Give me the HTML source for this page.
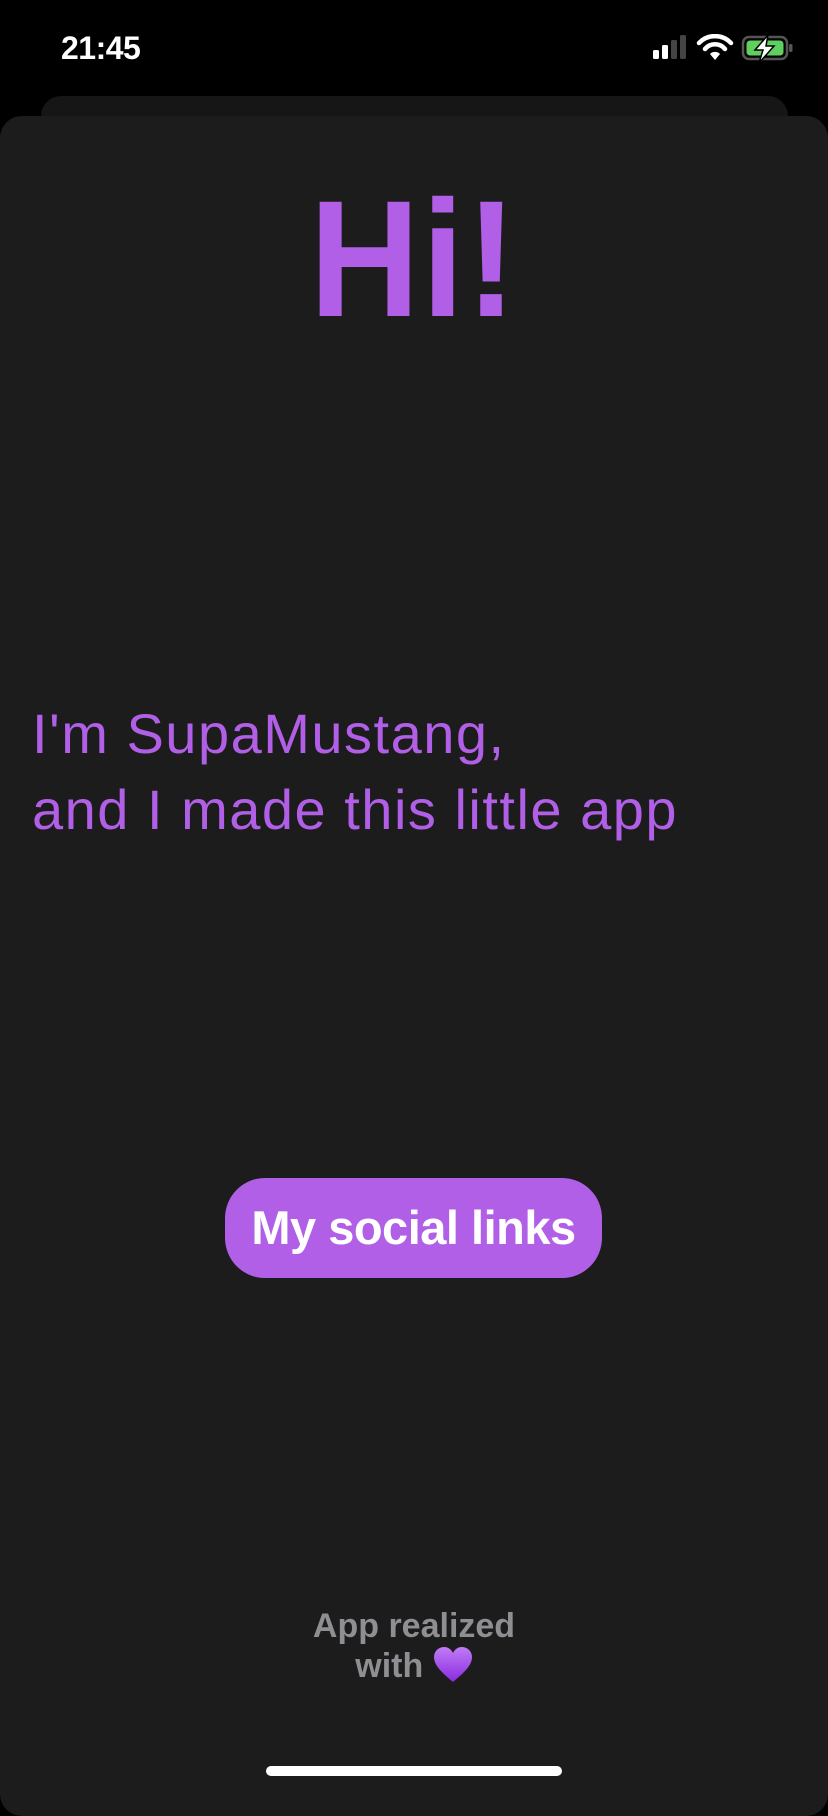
<!DOCTYPE html>
<html><head><meta charset="utf-8"><style>
body{margin:0;width:828px;height:1792px;background:#000;position:relative;overflow:hidden;font-family:"Liberation Sans",sans-serif}
.abs{position:absolute}
</style></head><body>
<div class="abs" style="left:61px;top:30px;color:#fff;font-size:32px;font-weight:bold;letter-spacing:-0.5px">21:45</div>
<svg class="abs" style="left:650px;top:34px" width="150" height="32" viewBox="0 0 150 32">
<rect x="3" y="16" width="6" height="9" rx="1.5" fill="#fff"/>
<rect x="12" y="11" width="6" height="14" rx="1.5" fill="#fff"/>
<rect x="21" y="6" width="6" height="19" rx="1.5" fill="#444"/>
<rect x="30" y="1" width="6" height="24" rx="1.5" fill="#444"/>
<path d="M49 9 A22 22 0 0 1 81 9" stroke="#fff" stroke-width="4.5" fill="none" stroke-linecap="round"/>
<path d="M55 15 A13 13 0 0 1 75 15" stroke="#fff" stroke-width="4.5" fill="none" stroke-linecap="round"/>
<path d="M65 26 L60 20 A7 7 0 0 1 70 20 Z" fill="#fff"/>
<rect x="93" y="3" width="44" height="22" rx="6" fill="none" stroke="#555" stroke-width="2.5"/>
<rect x="96.5" y="6.5" width="37" height="15" rx="3.5" fill="#5fcf5f"/>
<rect x="139" y="10" width="3.5" height="8" rx="1.5" fill="#555"/>
<path d="M118 1 L105 16 L113 16 L109 29 L124 12 L116 12 Z" fill="#fff" stroke="#000" stroke-width="1.5"/>
</svg>
<div class="abs" style="left:41px;top:96px;width:747px;height:60px;background:#161616;border-radius:20px"></div>
<div class="abs" style="left:0;top:116px;width:828px;height:1700px;background:#1c1c1c;border-radius:22px"></div>
<div class="abs" style="left:214px;top:160px;width:400px;text-align:center;color:#b05fe6;font-size:166px;font-weight:bold;line-height:200px;transform:scaleX(0.92);letter-spacing:2px">Hi!</div>
<div class="abs" style="left:32px;top:696px;color:#b05fe6;font-size:56px;line-height:76px;white-space:nowrap;letter-spacing:1.5px">I'm SupaMustang,<br>and I made this little app</div>
<div class="abs" style="left:225px;top:1178px;width:377px;height:100px;background:#b05fe6;border-radius:40px;color:#fff;font-size:47px;font-weight:bold;text-align:center;line-height:100px;letter-spacing:-0.5px">My social links</div>
<div class="abs" style="left:214px;top:1606px;width:400px;text-align:center;color:#8e8e93;font-size:34px;font-weight:bold;line-height:40px">App realized<br>with <span style="display:inline-block;width:40px;height:36px;vertical-align:-6px"><svg width="40" height="36" viewBox="0 0 40 36"><defs><linearGradient id="g" x1="0" y1="0" x2="0" y2="1"><stop offset="0" stop-color="#c07cf5"/><stop offset="1" stop-color="#8a2be0"/></linearGradient></defs><path d="M20 35 C8 25 1 18 1 10 C1 4 6 0 11 0 C15 0 18 2 20 6 C22 2 25 0 29 0 C34 0 39 4 39 10 C39 18 32 25 20 35 Z" fill="url(#g)"/></svg></span></div>
<div class="abs" style="left:266px;top:1766px;width:296px;height:10px;background:#fff;border-radius:5px"></div>
</body></html>
